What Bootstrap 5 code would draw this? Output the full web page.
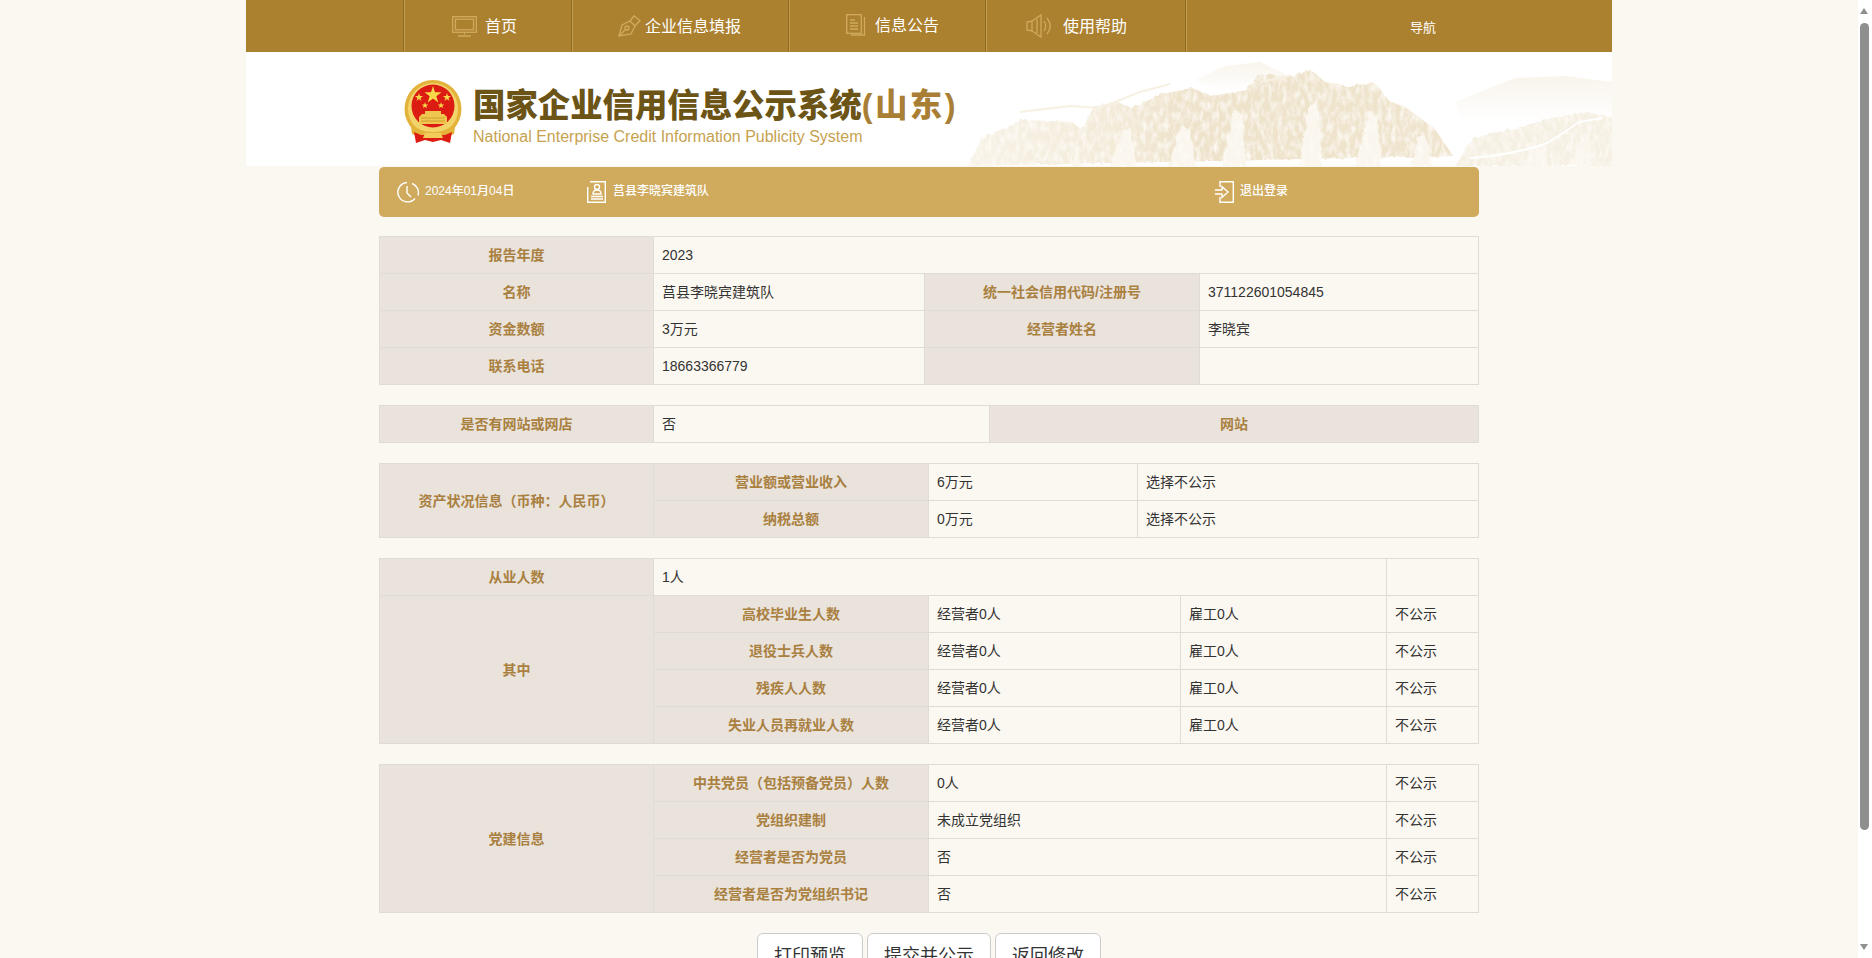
<!DOCTYPE html>
<html lang="zh-CN">
<head>
    <meta charset="UTF-8">
    <meta name="viewport" content="width=device-width, initial-scale=1.0">
    <title>国家企业信用信息公示系统(山东)</title>
    <link href="https://cdn.jsdelivr.net/npm/bootstrap@5.3.0/dist/css/bootstrap.min.css" rel="stylesheet">
    <style>
        body {
            background: #fbf8f1;
            color: #333;
            font-family: "Liberation Sans", "Noto Sans CJK SC", sans-serif;
            font-size: 14px;
            line-height: 20px;
            padding-right: 14px;
        }
        /* the window's scrollbar is part of the picture */
        .win-scroll { position: fixed; top: 0; right: 0; bottom: 0; width: 14px; background: #fff; }
        .win-scroll .thumb { position: absolute; top: 23px; left: 2px; width: 9px; height: 807px; border-radius: 5px; background: #8f8f8f; }
        .win-scroll .arrow { position: absolute; left: 2px; border-left: 4.5px solid transparent; border-right: 4.5px solid transparent; }
        .win-scroll .up { top: 8px; border-bottom: 6px solid #8f8f8f; }
        .win-scroll .down { bottom: 8px; border-top: 6px solid #8f8f8f; }
        .page-head { width: 1366px; margin: 0 auto; }
        .top-nav { height: 52px; background: #ab802e; padding-left: 157px; }
        .top-nav .nav-link {
            height: 52px;
            color: #fff;
            font-size: 16px;
            border-left: 1px solid #8f6a20;
            box-shadow: inset 1px 0 #c49c50;
            padding: 2px 0 0;
        }
        .top-nav svg { flex: none; margin-top: -2px; fill: none; stroke: #d0aa5d; stroke-width: 1.3; }
        .nav-home { width: 168px; padding-left: 48px !important; gap: 8px; }
        .nav-fill-in { width: 217px; padding-left: 46px !important; gap: 4px; }
        .nav-notice { width: 197px; padding-left: 57px !important; padding-top: 0 !important; gap: 9px; }
        .nav-help { width: 200px; padding-left: 40px !important; gap: 12px; }
        .top-nav .nav-guide { font-size: 13px; padding: 4px 0 0 224px; }
        .banner { height: 114px; background: #fff; }
        .banner .hills { position: absolute; right: 0; top: 0; }
        .banner-inner { padding: 28px 0 0 158px; gap: 11px; }
        .title-block { padding-top: 6px; }
        .site-title {
            font-size: 32.4px;
            line-height: 40px;
            font-weight: 900;
            color: #6b5416;
            white-space: nowrap;
        }
        .site-title span { color: #a97f36; letter-spacing: 2.5px; }
        .site-sub { font-size: 16px; line-height: 18px; color: #c6a24f; margin-top: 2px; }
        .content { width: 1100px; margin: 0 auto; padding-bottom: 120px; }
        .info-bar {
            height: 50px;
            margin: 1px 0 -1px;
            background: #d0aa5d;
            border-radius: 5px;
            color: #fff;
            font-size: 12px;
            font-weight: 500;
            padding-left: 18px;
        }
        .info-bar svg { flex: none; fill: none; stroke: #fff; stroke-width: 1.4; }
        .info-bar span { margin-bottom: 2px; }
        .bar-date { width: 190px; gap: 5px; }
        .bar-name { width: 628px; gap: 7px; }
        .bar-exit { gap: 6px; }
        .info-table {
            table-layout: fixed;
            width: 1099px;
            margin: 20px 0 0;
            --bs-table-bg: #fbf8f1;
            --bs-table-color: #333;
            --bs-table-border-color: #dfdcd6;
            --bs-border-color: #dfdcd6;
        }
        .info-table > tbody > tr > td {
            height: 37px;
            padding: 0 8px;
            vertical-align: middle;
            line-height: 20px;
        }
        .info-table > tbody > tr > td.lbl {
            background-color: #e9e3dc;
            color: #a9803f;
            font-weight: 700;
            text-align: center;
        }
        .c274 { width: 274px; }
        .c275 { width: 275px; }
        .c271 { width: 271px; }
        .c279 { width: 279px; }
        .c336 { width: 336px; }
        .c489 { width: 489px; }
        .c209 { width: 209px; }
        .c341 { width: 341px; }
        .c252 { width: 252px; }
        .c206 { width: 206px; }
        .c92 { width: 92px; }
        .act-row { margin-top: 20px; gap: 4px; }
        .act-btn {
            background: #fff;
            border: 1px solid #ccc;
            border-radius: 6px;
            color: #333;
            font-size: 18px;
            line-height: 24px;
            padding: 10px 16px;
        }
    </style>
</head>
<body>
    <header class="page-head">
        <nav class="top-nav">
            <ul class="nav flex-nowrap">
                <li class="nav-item">
                    <a class="nav-link nav-home d-flex align-items-center" href="#">
                        <svg width="25" height="21" viewBox="0 0 25 21"><rect x=".7" y=".7" width="23.6" height="15.6"/><rect x="3.5" y="3.2" width="18" height="10.6"/><path d="M12.5 16.5v2M6 20h13"/></svg>
                        首页
                    </a>
                </li>
                <li class="nav-item">
                    <a class="nav-link nav-fill-in d-flex align-items-center" href="#">
                        <svg width="23" height="22" viewBox="0 0 23 22"><path d="M1 21l3-11 8-4 5 5-4 8z"/><circle cx="9" cy="13" r="2"/><path d="M1 21l6-6"/><path d="M12 6l4-5.200 6 5-5 5"/></svg>
                        企业信息填报
                    </a>
                </li>
                <li class="nav-item">
                    <a class="nav-link nav-notice d-flex align-items-center" href="#">
                        <svg width="20" height="22" viewBox="0 0 20 22"><rect x=".7" y=".7" width="14.600" height="18.600"/><path d="M18.500 3v18H5M4 6h5M4 9h8M4 12h8M4 15h8"/></svg>
                        信息公告
                    </a>
                </li>
                <li class="nav-item">
                    <a class="nav-link nav-help d-flex align-items-center" href="#">
                        <svg width="25" height="24" viewBox="0 0 25 24"><path d="M1 8v8l5 1V7zM6 7l9-6v22l-9-6"/><path d="M11 5v14M18 7c2 3 2 7 0 10M21 4c4 5 4 11 0 16"/></svg>
                        使用帮助
                    </a>
                </li>
                <li class="nav-item">
                    <a class="nav-link nav-guide d-flex align-items-center" href="#">导航</a>
                </li>
            </ul>
        </nav>
        <div class="banner position-relative">
            <svg class="hills" width="652" height="114" viewBox="0 0 652 114">
                <defs>
                    <filter id="rock" x="0" y="0" width="100%" height="100%">
                        <feTurbulence type="fractalNoise" baseFrequency="0.22 0.1" numOctaves="4" seed="11" result="n"/>
                        <feDisplacementMap in="SourceGraphic" in2="n" scale="4" result="d"/>
                        <feColorMatrix in="n" type="matrix" values="0 0 0 0 .99 0 0 0 0 .97 0 0 0 0 .93 1.800 0 0 0 -.680" result="w"/>
                        <feComposite in="w" in2="d" operator="in" result="wd"/>
                        <feMerge><feMergeNode in="d"/><feMergeNode in="wd"/></feMerge>
                        <feGaussianBlur stdDeviation=".35"/>
                    </filter>
                    <linearGradient id="fadeFar" x1="0" y1="0" x2="0" y2="1">
                        <stop offset="0" stop-color="#f3ead8" stop-opacity=".5"/>
                        <stop offset="1" stop-color="#f3ead8" stop-opacity="0"/>
                    </linearGradient>
                    <linearGradient id="fadeSide" x1="0" y1="0" x2="1" y2="0">
                        <stop offset="0" stop-color="#f8f3e8"/>
                        <stop offset=".3" stop-color="#f3ead8"/>
                        <stop offset=".45" stop-color="#eee2ca"/>
                        <stop offset="1" stop-color="#efe4cd"/>
                    </linearGradient>
                </defs>
                <path d="M235 28l30-14 35-4 25 12 0 10-60 8z" fill="url(#fadeFar)"/>
                <path d="M495 50l60-24 50-2 47 6v40h-150z" fill="url(#fadeFar)"/>
                <g filter="url(#rock)">
                    <path d="M8 114l14-28 40-18 50 2 10 8 12-24 24-4 14 6 30-14 30-6 20 8 35-6 10-14 14-1 18 1 22-6 14 12 22 4 28-3 14 18 16 6 30 22 18 27z" fill="url(#fadeSide)"/>
                    <path d="M495 114l18-28 42-10 46-12 25-4 26 6v48z" fill="#f6f0e3"/>
                    <path d="M112 114l5-24 4 24zM150 114l12-34 8-4 6 38zM208 114l14-42 8 8 6 34zM262 114l12-56 8 4 4 52zM340 114l8-58 10-8 4 66zM395 114l14-56 8 8 4 48zM450 114l8-28 8-2 6 30zM560 114l14-20 12-3 2 23zM610 114l14-34 6 4 2 30z" fill="#faf6ed"/>
                </g>
                <path d="M510 106c30-2 50-6 75-14l20-12 14-10 24-4" fill="none" stroke="#fff" stroke-width="2"/>
                <path d="M60 60l50-6 30 2 40-16 30-8M300 30l30-6" fill="none" stroke="#f7f1e4" stroke-width="2"/>
            </svg>
            <div class="banner-inner d-flex position-relative">
                <svg width="58" height="63" viewBox="0 0 58 63">
                    <ellipse cx="29" cy="29" rx="28.500" ry="29" fill="#e3b23a"/>
                    <ellipse cx="29" cy="29" rx="25" ry="26" fill="#f3d46a"/>
                    <circle cx="29" cy="26" r="21.500" fill="#dc1c13"/>
                    <path d="M29 6l2 6.300h6.500l-5.200 3.900 2 6.300-5.300-3.900-5.300 3.900 2-6.300-5.200-3.900H27zM15 13l1 3h3l-2.500 1.900 1 3L15 19l-2.500 1.900 1-3L11 16h3zM43 13l1 3h3l-2.500 1.900 1 3L43 19l-2.500 1.900 1-3L39 16h3zM21 22l.8 2.400h2.500l-2 1.500.8 2.400-2.100-1.500-2.100 1.500.8-2.400-2-1.500h2.500zM37 22l.8 2.400h2.500l-2 1.500.8 2.400-2.100-1.500-2.100 1.500.8-2.400-2-1.500h2.500z" fill="#f8d94a"/>
                    <path d="M18 34h22l3 3v7H15v-7zM21 31h16v3H21z" fill="#efc64e"/>
                    <path d="M17 38h24M17 41h24" stroke="#c9952a" stroke-width=".8"/>
                    <path d="M6 40c4 8 12 12 23 12s19-4 23-12l-2 14-8 3H16l-8-3z" fill="#e4b33a"/>
                    <path d="M10 52l7 3h24l7-3-2 11-9-3-8 2-8-2-9 3z" fill="#dc1c13"/>
                    <path d="M21 53h16l2 5H19z" fill="#f2cb58"/>
                </svg>
                <div class="title-block">
                    <div class="site-title">国家企业信用信息公示系统<span>(山东)</span></div>
                    <div class="site-sub">National Enterprise Credit Information Publicity System</div>
                </div>
            </div>
        </div>
    </header>

    <main class="content">
        <div class="info-bar d-flex align-items-center">
            <div class="bar-date d-flex align-items-center">
                <svg width="23" height="22" viewBox="0 0 23 22"><path d="M10 1.500a9.700 9.700 0 1 0 8 16M15 2.500a9.700 9.700 0 0 1 6 12M10 5v7l4 4"/></svg>
                <span>2024年01月04日</span>
            </div>
            <div class="bar-name d-flex align-items-center">
                <svg width="19" height="22" viewBox="0 0 19 22"><path d="M3 .7h15.300v20.600H.7V6"/><circle cx="10" cy="6" r="2.500"/><path d="M6 13c0-3 1.500-4 4-4s4 1 4 4zM4 15.500h12M4 18h12"/></svg>
                <span>莒县李晓宾建筑队</span>
            </div>
            <div class="bar-exit d-flex align-items-center">
                <svg width="19" height="22" viewBox="0 0 19 22"><path d="M5 6V.7h13.300v20.600H5V16M0 9h7V5.500L13 11l-6 5.500V13H0"/></svg>
                <span>退出登录</span>
            </div>
        </div>

        <table class="table table-bordered info-table">
            <colgroup><col class="c274"><col class="c271"><col class="c275"><col class="c279"></colgroup>
            <tbody>
                <tr><td class="lbl">报告年度</td><td colspan="3">2023</td></tr>
                <tr><td class="lbl">名称</td><td>莒县李晓宾建筑队</td><td class="lbl">统一社会信用代码/注册号</td><td>371122601054845</td></tr>
                <tr><td class="lbl">资金数额</td><td>3万元</td><td class="lbl">经营者姓名</td><td>李晓宾</td></tr>
                <tr><td class="lbl">联系电话</td><td>18663366779</td><td class="lbl"></td><td></td></tr>
            </tbody>
        </table>

        <table class="table table-bordered info-table">
            <colgroup><col class="c274"><col class="c336"><col class="c489"></colgroup>
            <tbody>
                <tr><td class="lbl">是否有网站或网店</td><td>否</td><td class="lbl">网站</td></tr>
            </tbody>
        </table>

        <table class="table table-bordered info-table">
            <colgroup><col class="c274"><col class="c275"><col class="c209"><col class="c341"></colgroup>
            <tbody>
                <tr><td class="lbl" rowspan="2">资产状况信息（币种：人民币）</td><td class="lbl">营业额或营业收入</td><td>6万元</td><td>选择不公示</td></tr>
                <tr><td class="lbl">纳税总额</td><td>0万元</td><td>选择不公示</td></tr>
            </tbody>
        </table>

        <table class="table table-bordered info-table">
            <colgroup><col class="c274"><col class="c275"><col class="c252"><col class="c206"><col class="c92"></colgroup>
            <tbody>
                <tr><td class="lbl">从业人数</td><td colspan="3">1人</td><td></td></tr>
                <tr><td class="lbl" rowspan="4">其中</td><td class="lbl">高校毕业生人数</td><td>经营者0人</td><td>雇工0人</td><td>不公示</td></tr>
                <tr><td class="lbl">退役士兵人数</td><td>经营者0人</td><td>雇工0人</td><td>不公示</td></tr>
                <tr><td class="lbl">残疾人人数</td><td>经营者0人</td><td>雇工0人</td><td>不公示</td></tr>
                <tr><td class="lbl">失业人员再就业人数</td><td>经营者0人</td><td>雇工0人</td><td>不公示</td></tr>
            </tbody>
        </table>

        <table class="table table-bordered info-table">
            <colgroup><col class="c274"><col class="c275"><col class="c252"><col class="c206"><col class="c92"></colgroup>
            <tbody>
                <tr><td class="lbl" rowspan="4">党建信息</td><td class="lbl">中共党员（包括预备党员）人数</td><td colspan="2">0人</td><td>不公示</td></tr>
                <tr><td class="lbl">党组织建制</td><td colspan="2">未成立党组织</td><td>不公示</td></tr>
                <tr><td class="lbl">经营者是否为党员</td><td colspan="2">否</td><td>不公示</td></tr>
                <tr><td class="lbl">经营者是否为党组织书记</td><td colspan="2">否</td><td>不公示</td></tr>
            </tbody>
        </table>

        <div class="act-row d-flex justify-content-center">
            <button type="button" class="btn act-btn">打印预览</button>
            <button type="button" class="btn act-btn">提交并公示</button>
            <button type="button" class="btn act-btn">返回修改</button>
        </div>
    </main>
    <div class="win-scroll">
        <div class="arrow up"></div>
        <div class="thumb"></div>
        <div class="arrow down"></div>
    </div>
    <script src="https://cdn.jsdelivr.net/npm/bootstrap@5.3.0/dist/js/bootstrap.bundle.min.js"></script>
</body>
</html>
